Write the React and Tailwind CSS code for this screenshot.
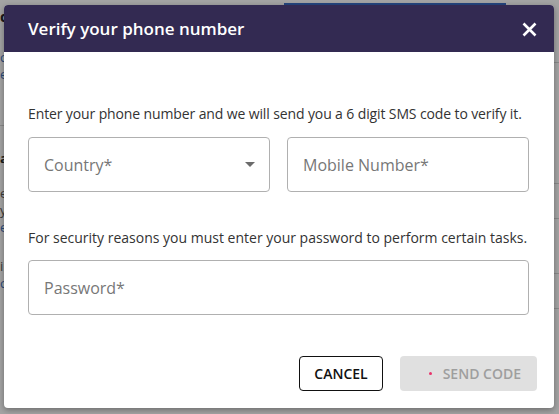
import React from "react";

function Frag({ children, className }) {
  return <div className={"h-[17px] leading-[17px] text-[13px] overflow-hidden " + className}>{children}</div>;
}

export default function App() {
  return (
    <div
      className="relative w-[559px] h-[414px] overflow-hidden bg-[#a4a4a4]"
      style={{ fontFamily: '"Open Sans", "Noto Sans", sans-serif' }}
    >
      {/* underlying page, seen behind the backdrop */}
      <div className="flex justify-between h-full">
        <div className="w-[5px] flex flex-col pt-[8px]">
          <Frag className="font-bold text-[#1a1a1a] text-[15px]">d</Frag>
          <div className="h-[24px]" />
          <Frag className="text-[#2a4a7a]">c</Frag>
          <Frag className="text-[#2a4a7a]">e</Frag>
          <div className="mt-[42px] h-px bg-[#8a8a8a]" />
          <div className="mt-[24px]"><Frag className="font-bold text-[#1a1a1a]">a</Frag></div>
          <div className="mt-[18px] flex flex-col">
            <Frag className="text-[#3a3a3a]">e</Frag>
            <Frag className="text-[#3a3a3a]">y</Frag>
            <Frag className="text-[#2a4a7a]">e</Frag>
          </div>
          <div className="mt-[22px] flex flex-col">
            <Frag className="text-[#3a3a3a]">i</Frag>
            <Frag className="text-[#2a4a7a]">c</Frag>
          </div>
        </div>
        <div className="flex-1 flex flex-col items-start pt-[3px] pl-[279px]">
          <div className="w-[222px] h-[3px] bg-[#25467f]" />
        </div>
        <div className="w-[5px] flex flex-col pt-[62px]">
          <div className="h-px bg-[#8a8a8a]" />
          <div className="mt-[120px] h-px bg-[#8a8a8a]" />
          <div className="mt-[34px] h-px bg-[#8a8a8a]" />
          <div className="mt-[54px] h-px bg-[#8a8a8a]" />
          <div className="mt-[34px] h-px bg-[#8a8a8a]" />
        </div>
      </div>

      {/* modal dialog over the page */}
      <div className="absolute left-[4px] top-[5px] w-[550px] h-[403px] bg-white rounded-[4px] shadow-[0_2px_6px_rgba(0,0,0,0.35)] flex flex-col overflow-hidden">
        <div className="h-[47px] shrink-0 bg-[#332a52] flex items-center justify-between pl-6 pr-[17px]">
          <span className="text-white text-[17px] font-semibold">Verify your phone number</span>
          <svg width="15" height="15" viewBox="0 0 15 15" className="mt-[1px]">
            <path d="M1.5 1.5 L13.5 13.5 M13.5 1.5 L1.5 13.5" stroke="white" strokeWidth="2.6" />
          </svg>
        </div>

        <div className="pl-6 pr-[25px] flex flex-col">
          <p className="mt-[52px] text-[14px] leading-[20px] text-[#333] whitespace-nowrap tracking-[-0.12px]">
            Enter your phone number and we will send you a 6 digit SMS code to verify it.
          </p>
          <div className="mt-[13px] grid grid-cols-2 gap-[17px]">
            <div className="h-[55px] border border-[#b0b0b0] rounded-[4px] flex items-center justify-between pl-[15px] pr-[14px]">
              <span className="text-[16px] text-[#777]">Country*</span>
              <svg width="10" height="5" viewBox="0 0 10 5">
                <path d="M0 0 L10 0 L5 5 Z" fill="#6b6b6b" />
              </svg>
            </div>
            <div className="h-[55px] border border-[#b0b0b0] rounded-[4px] flex items-center pl-[15px]">
              <span className="text-[16px] text-[#777]">Mobile Number*</span>
            </div>
          </div>
          <p className="mt-[36px] text-[14px] leading-[20px] text-[#333] whitespace-nowrap">
            For security reasons you must enter your password to perform certain tasks.
          </p>
          <div className="mt-[12px] h-[55px] border border-[#b0b0b0] rounded-[4px] flex items-center pl-[15px]">
            <span className="text-[16px] text-[#777]">Password*</span>
          </div>
        </div>

        <div className="mt-[41px] flex justify-end gap-[17px] pr-[17px]">
          <button className="w-[84px] h-[35px] border border-[#111] rounded-[4px] bg-white text-[14px] font-semibold text-[#111] flex items-center justify-center">
            CANCEL
          </button>
          <button className="w-[137px] h-[35px] rounded-[4px] bg-[#e0e0e0] text-[14px] font-semibold text-[#9e9e9e] flex items-center justify-end pr-[16px] gap-[11px]">
            <span className="w-[3px] h-[3px] rounded-full bg-[#e8336b]" />
            SEND CODE
          </button>
        </div>
      </div>
    </div>
  );
}
